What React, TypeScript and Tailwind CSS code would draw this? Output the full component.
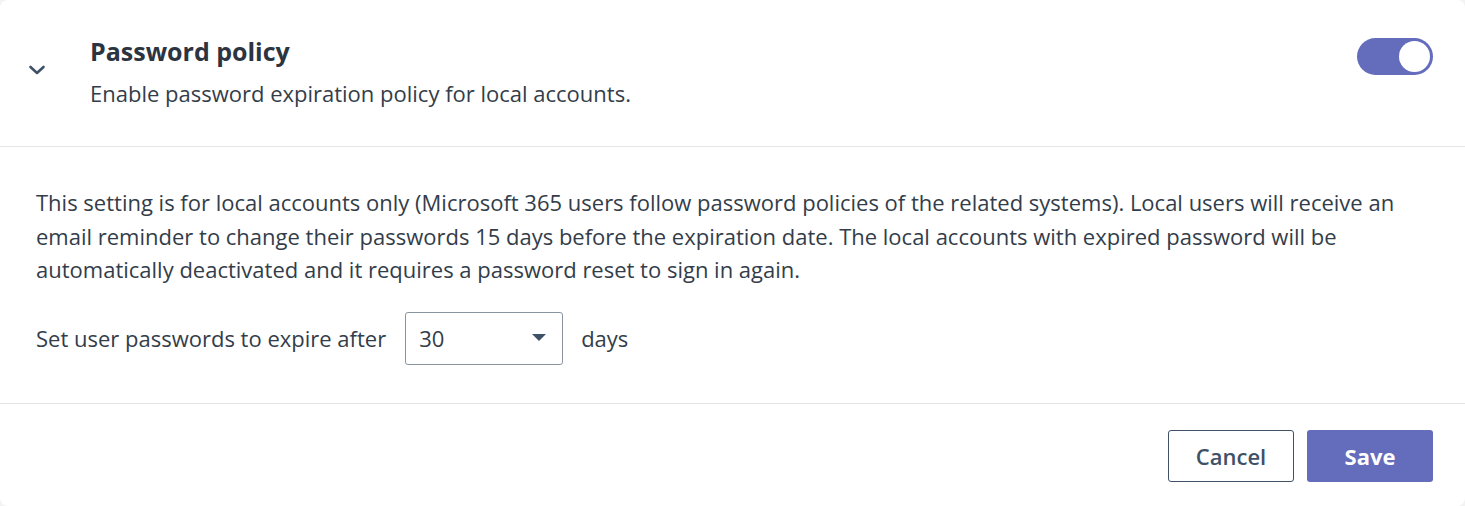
import React from "react";

export default function App() {
  return (
    <div className="w-[1465px] h-[506px] bg-[#f3f3f3] overflow-hidden" style={{ fontFamily: '"Open Sans", sans-serif' }}>
      <div className="w-full h-full bg-white rounded-[8px] flex flex-col text-[#333d4a]">
        <div className="h-[147px] flex items-start border-b border-[#e4e4e4] shrink-0">
          <div className="w-[90px] pt-[61px] pl-[27px]">
            <svg width="20" height="18" viewBox="0 0 20 18" fill="none">
              <path d="M3.5 6 L10 12 L16.5 6" stroke="#3f5166" strokeWidth="2.6" strokeLinecap="round" strokeLinejoin="round" />
            </svg>
          </div>
          <div className="flex-1 pt-[35px]">
            <div className="text-[25px] leading-[32px] font-bold text-[#2b3440]">Password policy</div>
            <div className="text-[22px] leading-[28px] mt-[12px]">Enable password expiration policy for local accounts.</div>
          </div>
          <div className="pt-[38px] pr-[32px]">
            <div className="w-[76px] h-[37px] rounded-full bg-[#646cbc] flex items-center justify-end pr-[3px]">
              <div className="w-[31px] h-[31px] rounded-full bg-white" />
            </div>
          </div>
        </div>
        <div className="h-[257px] border-b border-[#e4e4e4] px-[36px] shrink-0">
          <p className="text-[22px] leading-[33.5px] pt-[39px] pr-[16px]">
            This setting is for local accounts only (Microsoft 365 users follow password policies of the related systems). Local users will receive an email reminder to change their passwords 15 days before the expiration date. The local accounts with expired password will be automatically deactivated and it requires a password reset to sign in again.
          </p>
          <div className="flex items-center mt-[25px] text-[22px]">
            <span>Set user passwords to expire after</span>
            <div className="ml-[19px] w-[158px] h-[53px] border border-[#8a949f] rounded-[3px] flex items-center justify-between pl-[13px] pr-[16px]">
              <span>30</span>
              <svg width="14" height="8" viewBox="0 0 14 8">
                <path d="M0 0 L14 0 L7 7 Z" fill="#3f5166" />
              </svg>
            </div>
            <span className="ml-[18px]">days</span>
          </div>
        </div>
        <div className="flex justify-end items-start pt-[26px] pr-[32px] gap-[13px]">
          <button className="w-[126px] h-[52px] border border-[#3f5166] rounded-[3px] bg-white text-[22px] text-[#3f5166] font-semibold">Cancel</button>
          <button className="w-[126px] h-[52px] rounded-[3px] bg-[#646cbc] text-[22px] text-white font-bold">Save</button>
        </div>
      </div>
    </div>
  );
}
